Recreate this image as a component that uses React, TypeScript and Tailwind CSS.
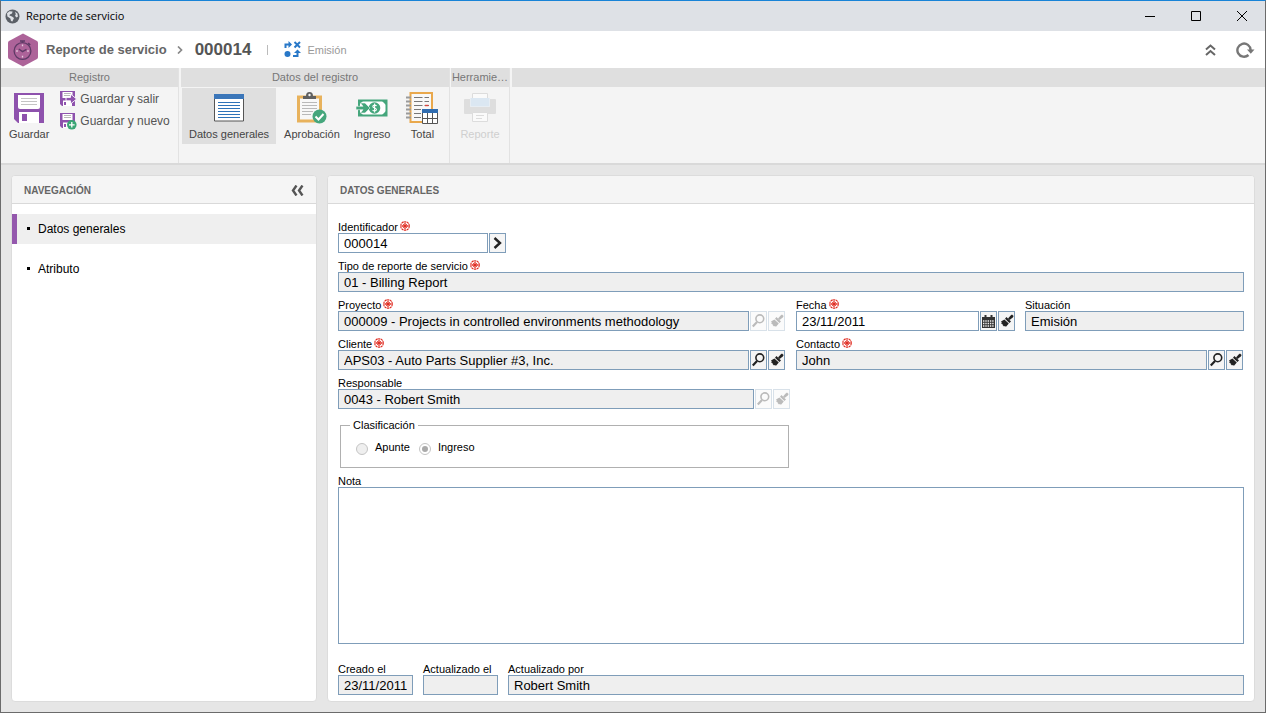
import React from 'react';

const ICON_BUTTON = 'flex h-5 w-[17px] shrink-0 items-center justify-center border border-[#7f9db9] bg-[#f5f5f5] disabled:opacity-30';

const GlobeIcon = () => (
  <svg width="15" height="15" viewBox="0 0 15 15">
    <circle cx="7.5" cy="7.5" r="7" fill="#5b6067" />
    <path d="M2 4.2 L4.4 2.2 L7.6 2.4 L7 4.5 L4.8 5.4 L4.4 6.6 L7 7.4 L9 9 L7.4 12.4 L6 12 L5.4 9.4 L2.4 7.4 Z" fill="#dee1e6" />
    <path d="M10 2.8 L12.4 4.6 L13 7.4 L11.4 8.4 L10 6.8 L10.8 5.2 Z" fill="#dee1e6" />
  </svg>
);

const HexIcon = () => (
  <svg width="30" height="34" viewBox="0 0 30 34">
    <path d="M15 0.5 L29 8 Q30 8.6 30 10 V24 Q30 25.4 29 26 L15 33.5 L1 26 Q0 25.4 0 24 V10 Q0 8.6 1 8 Z" fill="#ad6399" />
    <circle cx="14.5" cy="18" r="8.4" fill="none" stroke="#5e3a66" strokeWidth="1.3" />
    <path d="M12 8 H17 M14.5 8 V9.6 M20.2 10 L22.2 12" stroke="#5e3a66" strokeWidth="1.6" />
    <path d="M10.8 16 L14.5 18.6 L18.5 16.4" fill="none" stroke="#5e3a66" strokeWidth="1.4" />
    <path d="M14.5 11.6 V13.2 M14.5 22.8 V24.4 M8.2 18 H9.8 M19.2 18 H20.8" stroke="#e8cfe2" strokeWidth="1.3" />
  </svg>
);

const FlowIcon = () => (
  <svg width="17" height="17" viewBox="0 0 17 17" fill="none" stroke="#2878c8" strokeWidth="2">
    <path d="M1.5 7 V3.5 H5" />
    <path d="M4.5 0 L8 3.5 L4.5 7 Z" fill="#2878c8" stroke="none" />
    <path d="M10.5 1 L16 6.5 M16 1 L10.5 6.5" />
    <circle cx="3.5" cy="13" r="3" fill="#2878c8" stroke="none" />
    <path d="M9 15 H13.5 V11" />
    <path d="M10 12 L13.5 8.5 L17 12 Z" fill="#2878c8" stroke="none" />
  </svg>
);

const SaveIcon = () => (
  <svg width="30" height="30" viewBox="0 0 30 30">
    <path d="M0 0 H30 V30 H4 L0 26 Z" fill="#8e52ad" />
    <path d="M4 2 H26 V14 Q26 16 24 16 H6 Q4 16 4 14 Z" fill="#fff" />
    <path d="M7 5.5 H23 M7 8.5 H23 M7 11.5 H23" stroke="#c4c4c4" />
    <path d="M5 19 H25 V30 H5 Z" fill="#fff" />
    <path d="M8 21 H13 V28 H8 Z" fill="#8e52ad" />
  </svg>
);

const SmallSave = ({ children }: { children: React.ReactNode }) => (
  <svg width="17" height="17" viewBox="0 0 17 17">
    <path d="M0 0 H15 V15 H2 L0 13 Z" fill="#8e52ad" />
    <path d="M2.5 1 H12.5 V7 H2.5 Z M3 9.5 H12 V15 H3 Z" fill="#fff" />
    <path d="M4 2.5 H11 M4 4.5 H11" stroke="#b8b8b8" />
    <path d="M4 11 H6 V14 H4 Z" fill="#8e52ad" />
    {children}
  </svg>
);

const ListIcon = () => (
  <svg width="30" height="28" viewBox="0 0 30 28">
    <path d="M0.5 0.5 H29.5 V27 H0.5 Z" fill="#fff" stroke="#555" />
    <path d="M0 0 H30 V5 H0 Z" fill="#3b76b9" />
    <path d="M4 8.5 H26 M4 11.5 H26 M4 14.5 H26 M4 17.5 H26 M4 20.5 H26 M4 23.5 H26" stroke="#2f73b8" strokeWidth="1.2" />
  </svg>
);

const ClipboardIcon = () => (
  <svg width="30" height="32" viewBox="0 0 30 32">
    <path d="M1.5 5 H23.5 V29 H1.5 Z" fill="#f8f8f8" stroke="#e8b25c" strokeWidth="3" />
    <path d="M6 7 V4 H9 Q9 0 12.5 0 Q16 0 16 4 H19 V7 Z" fill="#606060" />
    <circle cx="12.5" cy="3" r="1.2" fill="#f4f4f4" />
    <path d="M5 10.5 H20 M5 13.5 H20 M5 16.5 H20 M5 19.5 H16 M5 22.5 H14" stroke="#b9b9b9" />
    <circle cx="22.5" cy="24.5" r="7" fill="#45a67c" />
    <path d="M18.5 24.5 L21.5 27.5 L26.5 22" fill="none" stroke="#fff" strokeWidth="2" />
  </svg>
);

const MoneyIcon = () => (
  <svg width="32" height="18" viewBox="0 0 32 18">
    <path d="M3 1.5 H30.5 V16.5 H3 Z" fill="#fff" stroke="#45a67c" strokeWidth="2" />
    <path d="M3 2 H7 L3 6 Z M30 2 V6 L26 2 Z M30 16 H26 L30 12 Z M3 16 V12 L7 16 Z" fill="#45a67c" />
    <circle cx="18.5" cy="9" r="5.8" fill="#45a67c" />
    <path d="M20.6 6.8 Q18.6 5.4 17 6.8 Q16.4 8.4 18.6 9 Q21 9.8 20.2 11.2 Q18.6 12.6 16.6 11.2 M18.6 4.6 V13.4" fill="none" stroke="#fff" strokeWidth="1.1" />
    <path d="M0 7.3 H7 L4.5 4 H9 L14 9 L9 14 H4.5 L7 10.7 H0 Z" fill="#45a67c" stroke="#f4f4f4" strokeWidth="0.6" />
  </svg>
);

const TotalIcon = () => (
  <svg width="32" height="32" viewBox="0 0 32 32">
    <path d="M4.5 1 H26 V30 H4.5 Z" fill="#f8f8f8" stroke="#e9a84c" strokeWidth="2" />
    <path d="M8 5.5 H23 M8 9.5 H23 M8 13.5 H23 M8 17.5 H15 M8 21.5 H15 M8 25.5 H15" stroke="#777" />
    <path d="M17.5 4 V16" stroke="#f8f8f8" strokeWidth="2" />
    <path d="M19 13.5 H22.5" stroke="#d9433c" strokeWidth="1.4" />
    <path d="M0 5.5 H5 M0 9.5 H5 M0 13.5 H5 M0 17.5 H5 M0 21.5 H5 M0 25.5 H5" stroke="#9a9a9a" strokeWidth="2" />
    <path d="M16.5 17.5 H31.5 V31.5 H16.5 Z" fill="#fff" stroke="#555" />
    <path d="M16 17 H32 V21 H16 Z" fill="#2f6cb0" />
    <path d="M21.5 21 V31 M26.5 21 V31 M17 26.5 H31" stroke="#555" />
  </svg>
);

const PrinterIcon = () => (
  <svg width="32" height="30" viewBox="0 0 32 30">
    <path d="M8.5 0.5 H23.5 V6 H8.5 Z" fill="#fafafa" stroke="#dcdcdc" />
    <path d="M1 6 H6 V13 Q6 14 7 14 H25 Q26 14 26 13 V6 H31 Q32 6 32 7 V20 Q32 21 31 21 H1 Q0 21 0 20 V7 Q0 6 1 6 Z" fill="#dedede" />
    <path d="M6.5 5 H25.5 V13.5 H6.5 Z" fill="#dbe7f2" />
    <path d="M8.5 19.5 H23.5 V28.5 H8.5 Z" fill="#fafafa" stroke="#dcdcdc" />
    <path d="M12 22.5 H20 M12 25.5 H18" stroke="#dcdcdc" />
  </svg>
);

const SearchIcon = () => (
  <svg width="13" height="14" viewBox="0 0 13 14" fill="none" stroke="#222">
    <circle cx="7.8" cy="4.8" r="3.9" strokeWidth="1.6" />
    <path d="M5 8 L0.8 12.4" strokeWidth="2.2" />
  </svg>
);

const BrushIcon = () => (
  <svg width="14" height="14" viewBox="0 0 14 14" fill="#222">
    <path d="M12 0.5 L13.6 2 L12.8 3.4 L9.6 6 L8 4.4 L10.6 1.4 Z" />
    <path d="M6.4 3 L11 7.4 L9.4 9 L5 4.8 Z" />
    <path d="M4.4 5.4 L8.8 9.6 L6 12.8 L4.8 12 L4 12.6 L2.8 11.2 L2.4 10 L1 9.4 L1.8 8.4 L1 7.4 Z" />
  </svg>
);

const CalendarIcon = () => (
  <svg width="13" height="13" viewBox="0 0 13 13">
    <path d="M0 2 H13 V13 H0 Z M2.5 0 H4.5 V3 H2.5 Z M8.5 0 H10.5 V3 H8.5 Z" fill="#333" />
    <path d="M1 6 H12 M1 8.5 H12 M1 11 H12" stroke="#eee" strokeWidth="1.4" strokeDasharray="1.4 0.9" />
  </svg>
);

const RequiredMark = () => (
  <svg width="10" height="10" viewBox="0 0 10 10" className="mb-0.5 ml-0.5" fill="none" stroke="#e02b20">
    <circle cx="5" cy="5" r="4.3" strokeWidth="1.1" strokeDasharray="2.2 0.5" />
    <path d="M5 1.5 V8.5 M1.5 5 H8.5" strokeWidth="1.3" />
    <path d="M3 3 L7 7 M7 3 L3 7" strokeWidth="0.8" />
  </svg>
);

type FieldProps = {
  id: string;
  label: string;
  value: string;
  required?: boolean;
  editable?: boolean;
  className?: string;
  inputClass?: string;
  children?: React.ReactNode;
};

const Field = ({ id, label, value, required, editable, className = '', inputClass = 'flex-1', children }: FieldProps) => (
  <div className={`min-w-0 ${className}`}>
    <label htmlFor={id} className="flex h-[19px] items-end text-[11px] leading-3 whitespace-nowrap">
      {label}
      {required && <RequiredMark />}
    </label>
    <div className="flex gap-px">
      <input
        id={id}
        defaultValue={value}
        readOnly={!editable}
        className={`h-5 min-w-0 border border-[#7f9db9] px-[5px] text-[13px] outline-none ${editable ? 'bg-white' : 'bg-[#efefef]'} ${inputClass}`}
      />
      {children}
    </div>
  </div>
);

const LookupButtons = ({ name, disabled }: { name: string; disabled?: boolean }) => (
  <>
    <button aria-label={`Buscar ${name}`} disabled={disabled} className={ICON_BUTTON}><SearchIcon /></button>
    <button aria-label={`Limpiar ${name}`} disabled={disabled} className={ICON_BUTTON}><BrushIcon /></button>
  </>
);

type RibbonButtonProps = { label: string; icon: React.ReactNode; active?: boolean; disabled?: boolean; className?: string };

const RibbonButton = ({ label, icon, active, disabled, className = 'px-[7px]' }: RibbonButtonProps) => (
  <button
    disabled={disabled}
    className={`mt-px flex h-14 flex-col items-center text-[11px] ${active ? 'bg-[#dfdfdf]' : ''} ${disabled ? 'text-[#cfcfcf]' : 'text-[#444]'} ${className}`}
  >
    <span className="flex h-10 items-center">{icon}</span>
    <span className="leading-3">{label}</span>
  </button>
);

const RibbonGroup = ({ title, className, children }: { title: string; className: string; children?: React.ReactNode }) => (
  <section className={`flex flex-col ${className}`}>
    <h2 className="h-[19px] bg-[#dfdfdf] text-center text-[11px] leading-[19px] whitespace-nowrap text-[#777]">{title}</h2>
    <div className="flex flex-1">{children}</div>
  </section>
);

const PanelHeader = ({ title, children }: { title: string; children?: React.ReactNode }) => (
  <div className="flex h-7 items-center justify-between border-b border-[#d9d9d9] bg-[#f5f5f5] px-3 pt-0.5">
    <h2 className="text-[10px] font-bold text-[#666]">{title}</h2>
    {children}
  </div>
);

const App = () => {
  return (
    <div className="flex min-h-screen flex-col border border-[#6b6b6b] border-t-[#1883d7] bg-[#e6e6e6] font-['Liberation_Sans',Arial,sans-serif] text-black">
      {/* Title bar */}
      <div className="flex h-[30px] items-center bg-[#dee1e6] pl-1">
        <GlobeIcon />
        <span className="ml-1.5 flex-1 font-['Open_Sans','Segoe_UI',sans-serif] text-[11px]">Reporte de servicio</span>
        <button aria-label="Minimizar" className="flex h-full w-[46px] items-center justify-center">
          <svg width="10" height="10" viewBox="0 0 10 10"><path d="M0 5.5 H10" stroke="#000" /></svg>
        </button>
        <button aria-label="Maximizar" className="flex h-full w-[46px] items-center justify-center">
          <svg width="10" height="10" viewBox="0 0 10 10"><path d="M0.5 0.5 H9.5 V9.5 H0.5 Z" fill="none" stroke="#000" /></svg>
        </button>
        <button aria-label="Cerrar" className="flex h-full w-[46px] items-center justify-center">
          <svg width="10" height="10" viewBox="0 0 10 10"><path d="M0 0 L10 10 M10 0 L0 10" stroke="#000" /></svg>
        </button>
      </div>

      {/* Header */}
      <header className="flex h-[37px] items-center bg-white pr-2.5 pl-[7px]">
        <HexIcon />
        <h1 className="ml-2 text-[13px] font-bold text-[#666]">Reporte de servicio</h1>
        <svg width="6" height="8" viewBox="0 0 6 8" className="ml-2.5"><path d="M1 0.5 L4.5 4 L1 7.5" fill="none" stroke="#888" strokeWidth="1.7" /></svg>
        <span className="ml-3 text-[17px] font-bold text-[#555]">000014</span>
        <span className="ml-4 h-2.5 w-px bg-[#bbb]"></span>
        <span className="ml-4"><FlowIcon /></span>
        <span className="ml-1.5 flex-1 pt-0.5 text-[11px] text-[#999]">Emisión</span>
        <button aria-label="Contraer cinta" className="mr-5">
          <svg width="11" height="12" viewBox="0 0 11 12" fill="none" stroke="#666" strokeWidth="2"><path d="M1 5.5 L5.5 1.5 L10 5.5 M1 11 L5.5 7 L10 11" /></svg>
        </button>
        <button aria-label="Actualizar">
          <svg width="19" height="16" viewBox="0 0 19 16">
            <path d="M12.5 13 A6.6 6.6 0 1 1 14.6 8" fill="none" stroke="#777" strokeWidth="2.4" />
            <path d="M11 7.5 H18.5 L14.8 11.8 Z" fill="#777" />
          </svg>
        </button>
      </header>

      {/* Ribbon */}
      <div className="flex h-[97px] border-b-2 border-[#d9d9d9] bg-[#f4f4f4]">
        <RibbonGroup title="Registro" className="w-[178px] border-r border-[#e2e2e2]">
          <RibbonButton label="Guardar" icon={<SaveIcon />} className="px-2" />
          <div className="ml-[3px] mt-px flex flex-col text-[12px] text-[#555]">
            <button className="flex h-[22px] items-center gap-[3px]">
              <SmallSave>
                <path d="M6 6.4 H10.5 V3 L16.6 8 L10.5 13 V9.8 H6 Z" fill="#8e52ad" stroke="#fff" strokeWidth="0.9" />
              </SmallSave>
              Guardar y salir
            </button>
            <button className="flex h-[22px] items-center gap-[3px]">
              <SmallSave>
                <circle cx="11.8" cy="11.8" r="4.8" fill="#3aa675" />
                <path d="M11.8 9 V14.6 M9 11.8 H14.6" stroke="#fff" strokeWidth="1.3" />
              </SmallSave>
              Guardar y nuevo
            </button>
          </div>
        </RibbonGroup>
        <RibbonGroup title="Datos del registro" className="ml-0.5 w-[269px] border-r border-[#e2e2e2]">
          <RibbonButton label="Datos generales" icon={<ListIcon />} active className="mx-px px-[7px]" />
          <RibbonButton label="Aprobación" icon={<ClipboardIcon />} />
          <RibbonButton label="Ingreso" icon={<MoneyIcon />} />
          <RibbonButton label="Total" icon={<TotalIcon />} className="px-[9px]" />
        </RibbonGroup>
        <RibbonGroup title="Herramie…" className="ml-px w-[59px] border-r border-[#e2e2e2]">
          <RibbonButton label="Reporte" icon={<PrinterIcon />} disabled className="w-full" />
        </RibbonGroup>
        <div className="ml-0.5 h-[19px] flex-1 bg-[#dfdfdf]"></div>
      </div>

      <div className="flex flex-1 gap-2.5 px-2.5 pt-2.5 pb-2.5">
        {/* Navigation */}
        <nav className="w-[306px] shrink-0 overflow-hidden rounded-sm border border-[#dcdcdc] bg-white">
          <PanelHeader title="NAVEGACIÓN">
            <button aria-label="Contraer navegación">
              <svg width="13" height="11" viewBox="0 0 13 11" fill="none" stroke="#555" strokeWidth="2.4"><path d="M5.5 0.5 L2 5.5 L5.5 10.5 M11.5 0.5 L8 5.5 L11.5 10.5" /></svg>
            </button>
          </PanelHeader>
          <ul className="flex flex-col gap-2.5 pt-2.5 text-[12px]">
            {['Datos generales', 'Atributo'].map((item, idx) => (
              <li key={idx}>
                <a href="#" className={`flex h-[30px] items-center border-l-[5px] pl-2.5 ${idx === 0 ? 'border-[#9458ad] bg-[#efefef]' : 'border-transparent'}`}>
                  <span className="mr-2 mb-0.5 h-[3px] w-[3px] bg-black"></span>
                  {item}
                </a>
              </li>
            ))}
          </ul>
        </nav>

        {/* Form */}
        <main className="flex min-w-0 flex-1 flex-col overflow-hidden rounded-sm border border-[#dcdcdc] bg-white">
          <PanelHeader title="DATOS GENERALES" />
          <form className="flex flex-1 flex-col px-2.5 pt-2.5 pb-1.5" onSubmit={(e) => e.preventDefault()}>
            <Field id="identificador" label="Identificador" value="000014" required editable inputClass="w-[150px]">
              <button aria-label="Generar identificador" className={ICON_BUTTON}>
                <svg width="9" height="12" viewBox="0 0 9 12"><path d="M1.5 1 L7 6 L1.5 11" fill="none" stroke="#222" strokeWidth="2.4" /></svg>
              </button>
            </Field>
            <Field id="tipo" label="Tipo de reporte de servicio" value="01 - Billing Report" required />
            <div className="grid grid-cols-2 gap-x-2.5">
              <Field id="proyecto" label="Proyecto" value="000009 - Projects in controlled environments methodology" required className="pr-px">
                <LookupButtons name="proyecto" disabled />
              </Field>
              <div className="grid grid-cols-2 gap-x-2.5">
                <Field id="fecha" label="Fecha" value="23/11/2011" required editable>
                  <button aria-label="Abrir calendario" className={ICON_BUTTON}><CalendarIcon /></button>
                  <button aria-label="Limpiar fecha" className={ICON_BUTTON}><BrushIcon /></button>
                </Field>
                <Field id="situacion" label="Situación" value="Emisión" />
              </div>
              <Field id="cliente" label="Cliente" value="APS03 - Auto Parts Supplier #3, Inc." required className="pr-px">
                <LookupButtons name="cliente" />
              </Field>
              <Field id="contacto" label="Contacto" value="John" required className="pr-px">
                <LookupButtons name="contacto" />
              </Field>
              <Field id="responsable" label="Responsable" value="0043 - Robert Smith" className="-mr-1">
                <LookupButtons name="responsable" disabled />
              </Field>
            </div>
            <div className="grid grid-cols-2 gap-x-2.5">
              <fieldset className="mt-2.5 -mr-[3px] ml-0.5 h-[49px] border border-[#b0b0b0] px-[15px] text-[11px]">
                <legend className="-ml-1.5 px-[3px] leading-3">Clasificación</legend>
                <div className="mt-2 flex items-center">
                  <input id="apunte" type="radio" name="clasificacion" disabled className="mt-1 h-3 w-3 appearance-none rounded-full border border-[#c4c4c4] bg-[#efefef]" />
                  <label htmlFor="apunte" className="mr-[9px] ml-[7px]">Apunte</label>
                  <input id="ingreso" type="radio" name="clasificacion" disabled defaultChecked className="mt-1 h-3 w-3 appearance-none rounded-full border border-[#c4c4c4] bg-[#aaa] bg-clip-content p-0.5" />
                  <label htmlFor="ingreso" className="ml-[7px]">Ingreso</label>
                </div>
              </fieldset>
            </div>
            <label htmlFor="nota" className="flex h-[19px] items-end text-[11px] leading-3">Nota</label>
            <textarea id="nota" className="min-h-20 flex-1 resize-none border border-[#7f9db9] px-[5px] text-[13px] outline-none"></textarea>
            <div className="mt-3 flex gap-2.5">
              <Field id="creado" label="Creado el" value="23/11/2011" className="w-[75px]" />
              <Field id="actualizado" label="Actualizado el" value="" className="w-[75px]" />
              <Field id="actualizado-por" label="Actualizado por" value="Robert Smith" className="flex-1" />
            </div>
          </form>
        </main>
      </div>
    </div>
  );
};

export default App;
